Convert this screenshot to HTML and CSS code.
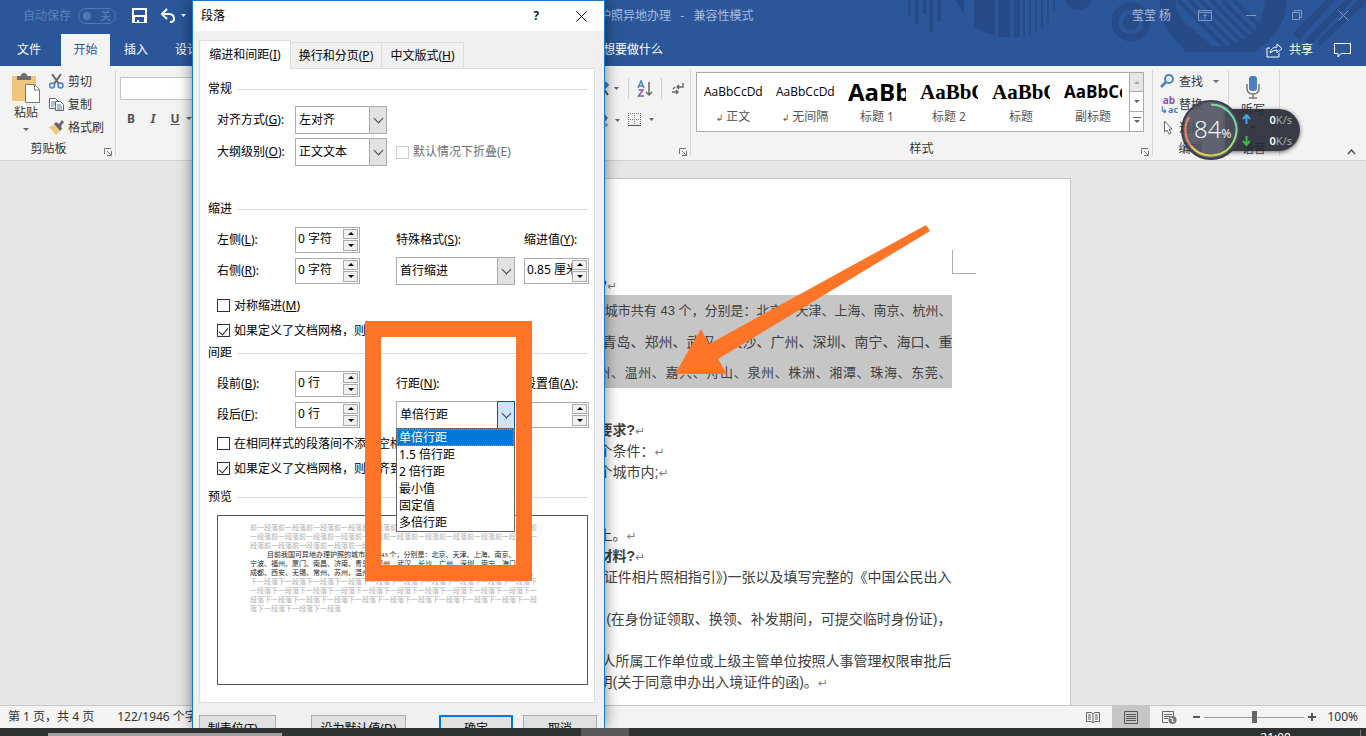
FILE: index.html
```html
<!DOCTYPE html>
<html lang="zh-CN">
<head>
<meta charset="utf-8">
<title>护照异地办理 - 兼容性模式</title>
<link rel="stylesheet" href="styles.css">
</head>
<body>
<header class="titlebar">
  <svg class="decor" width="470" height="66" viewBox="896 0 470 66" aria-hidden="true">
    <g fill="#264b87">
      <path d="M908 0h3v16h-3zM915 0h4v24h-4zM923 0h3v14h-3zM929 0h4v32h-4zM937 0h4v21h-4z"/>
      <path d="M955 0h9v14zM974 0h21v35q-12-2-21-8zM998 0h12v37h-12zM1014 0h6v37h-6zM1023 0h2v36h-2zM1029 0h2v35h-2zM1035 0h2v32h-2zM1041 0h2v28h-2zM1047 0h2v22h-2zM1053 0h2v12h-2z"/>
      <path d="M1065 0h27a14 13 0 0 1-27 0z"/>
      <circle cx="1131" cy="22" r="8"/>
      <path d="M1160 0h15q2 18 16 28l26 22h-30q-27-18-27-50zM1265 0h22q0 30-33 52h-68l-4-6h42q38-6 41-46z"/>
      <path d="M1293 33l33-33h9l-36 40zM1305 40l40-40h8l-43 46zM1318 40l40-40h8v3l-46 43z"/>
    </g>
    <circle cx="1131" cy="22" r="16" fill="none" stroke="#264b87" stroke-width="7"/>
    <g stroke="#264b87" stroke-width="4"><path d="M1178 0l50 50M1189 0l47 47M1200 0l42 42M1211 0l38 38M1222 0l33 33M1233 0l26 26"/></g>
  </svg>
  <div class="quick">
    <span class="autosave">自动保存</span>
    <button class="switch" aria-label="自动保存"><i></i><span>关</span></button>
    <button class="plain save" aria-label="保存"><svg width="15" height="15" viewBox="0 0 15 15"><path d="M0 0h15v15H0zM2 2v5h11V2zM3 9v5h2v-2h2v2h5V9z" fill="#fff" fill-rule="evenodd"/></svg></button>
    <button class="plain" aria-label="撤消"><svg width="27" height="16" viewBox="0 0 27 16"><path d="M7 1L2 6l5 5M2 6h7q5 0 5 5 0 3-4 3" fill="none" stroke="#fff" stroke-width="2"/><path d="M21 6h5l-2.500 3z" fill="#fff"/></svg></button>
  </div>
  <div class="doc-title">护照异地办理 &nbsp; - &nbsp; 兼容性模式</div>
  <div class="account">莹莹 杨</div>
  <button class="plain win" aria-label="功能区显示选项"><svg width="14" height="11" viewBox="0 0 14 11"><path d="M.5.5h13v10H.500zM1 2.500h12M7 9V4M5 6l2-2 2 2" fill="none" stroke="#7f9bc5"/></svg></button>
  <button class="plain win" aria-label="最小化"><svg width="11" height="11"><path d="M0 5.500h10" stroke="#7f9bc5"/></svg></button>
  <button class="plain win" aria-label="还原"><svg width="11" height="11" fill="none" stroke="#7f9bc5"><path d="M.5 2.500h7v7h-7zM2.500 2V.5h7v7H8"/></svg></button>
  <button class="plain win" aria-label="关闭"><svg width="11" height="11"><path d="M.5.5l10 10M10.500.5l-10 10" stroke="#7f9bc5"/></svg></button>
</header>
<nav class="tabs">
  <button>文件</button><button class="on">开始</button><button>插入</button><button>设计</button>
  <button class="tell">想要做什么</button>
  <button class="share"><svg width="17" height="15" viewBox="0 0 17 15" fill="none" stroke="#fff"><path d="M4 5H1v9h12v-4M4 10q1-6 7-6V1l5 4.500L11 10V7q-4 0-7 3z"/></svg>共享</button>
  <button class="comment" aria-label="批注"><svg width="17" height="15" viewBox="0 0 17 15"><path d="M.5.5h16v10H7l-3 3.500v-3.500H.500z" fill="none" stroke="#fff"/></svg></button>
</nav>
<section class="ribbon">
  <div class="group clip">
    <div class="tools">
      <button class="paste"><svg width="30" height="31" viewBox="0 0 30 31"><path d="M1 3h24v25H1z" fill="#efc67c"/><path d="M6 3h4q0-3 3-3t3 3h4v4H6z" fill="#6b6b6b"/><path d="M14.500 11.500h9l5 5v13h-14z" fill="#fff" stroke="#777"/><path d="M23.500 12v5h5" fill="none" stroke="#777"/></svg><span>粘贴</span><i class="caret"></i></button>
      <div class="stack">
        <button><svg width="15" height="15" viewBox="0 0 15 15"><path d="M3 0l7 10M12 0L5 10" stroke="#666" stroke-width="2"/><circle cx="3" cy="11.500" r="2.500" fill="none" stroke="#4a80bd" stroke-width="1.500"/><circle cx="11.500" cy="11.500" r="2.500" fill="none" stroke="#4a80bd" stroke-width="1.500"/></svg>剪切</button>
        <button><svg width="15" height="15" viewBox="0 0 15 15"><path d="M.5 1.500h6l2 2v8h-8z" fill="#fff" stroke="#666"/><path d="M2 5h4M2 7h4M2 9h3" stroke="#4a80bd"/><path d="M6.500 4.500h5l3 3v6h-8z" fill="#fff" stroke="#666"/><path d="M8 8h4M8 10h5M8 12h5" stroke="#4a80bd"/></svg>复制</button>
        <button><svg width="15" height="15" viewBox="0 0 15 15"><path d="M0 7l5-2 6 6-4 4z" fill="#efc67c"/><path d="M5 4l2-2 3 2 3-4 2 2-3 4 1 3-2 2z" fill="#666"/></svg>格式刷</button>
      </div>
    </div>
    <footer>剪贴板</footer><button class="launch" aria-label="剪贴板选项"><svg width="8" height="8"><path d="M.5 6V.5H7M3 3l4 4M7.500 3v4.500H3" fill="none" stroke="#777"/></svg></button>
  </div>
  <div class="group format">
    <div class="fontpart">
      <input class="fontname" aria-label="字体">
      <div class="bius"><button><b>B</b></button><button><b><em>I</em></b></button><button><b><u>U</u></b></button><i class="caret"></i></div>
    </div>
    <div class="parapart">
      <div class="prow"><button aria-label="中文版式"><svg width="23" height="18" viewBox="0 0 23 18"><path d="M0 5h11M8 2l3 3-3 3" fill="none" stroke="#4a80bd" stroke-width="2"/><path d="M2 15l4-7 5 7" fill="none" stroke="#555" stroke-width="2"/><path d="M17 7h5l-2.500 3z" fill="#666"/></svg></button><span class="bar"></span>
        <button aria-label="排序"><svg width="16" height="18" viewBox="0 0 16 18" fill="none"><path d="M1 8l3-7 3 7M2 6h4" stroke="#4a80bd" stroke-width="1.500"/><path d="M1.500 10H6l-4.500 6H7" stroke="#8e54a8" stroke-width="1.500"/><path d="M12 2v13M9 12l3 3 3-3" stroke="#666" stroke-width="1.500"/></svg></button><span class="bar"></span>
        <button class="marks" aria-label="显示编辑标记"><svg width="12" height="14" viewBox="0 0 12 14" fill="none" stroke="#666"><path d="M11 1v4H5M7 3L5 5l2 2M0 10h6M4 8l2 2-2 2M1 7l2-2" stroke-width="1.400"/></svg></button></div>
      <div class="prow two"><button aria-label="底纹"><svg width="24" height="14" viewBox="0 0 24 14"><path d="M2 5l5-5 4 5-4 5z" fill="#4a80bd"/><path d="M2 11h8v2H2z" fill="#fff" stroke="#777"/><path d="M18 6h5l-2.500 3z" fill="#666"/></svg></button>
        <button aria-label="边框"><svg width="27" height="14" viewBox="0 0 27 14"><path d="M1.500 0v12M7.500 0v12M13.500 0v12M1 .5h13M1 6.500h13" stroke="#777" stroke-dasharray="1 1"/><path d="M1 12.500h13" stroke="#555"/><path d="M22 5h5l-2.500 3z" fill="#666"/></svg></button></div>
    </div>
    <button class="launch" aria-label="段落设置"><svg width="8" height="8"><path d="M.5 6V.5H7M3 3l4 4M7.500 3v4.500H3" fill="none" stroke="#777"/></svg></button>
  </div>
  <div class="group styles">
    <div class="gallery">
      <button><span class="s-body">AaBbCcDd</span><small><i>↲</i> 正文</small></button>
      <button><span class="s-body">AaBbCcDd</span><small><i>↲</i> 无间隔</small></button>
      <button><span class="s-h1">AaBb</span><small>标题 1</small></button>
      <button><span class="s-serif">AaBbC</span><small>标题 2</small></button>
      <button><span class="s-serif">AaBbC</span><small>标题</small></button>
      <button><span class="s-sub">AaBbCc</span><small>副标题</small></button>
      <div class="scrolls"><button class="off" aria-label="上一行"><i class="caret up"></i></button><button aria-label="下一行"><i class="caret"></i></button><button aria-label="其他"><i class="caret lined"></i></button></div>
    </div>
    <footer>样式</footer><button class="launch" aria-label="样式选项"><svg width="8" height="8"><path d="M.5 6V.5H7M3 3l4 4M7.500 3v4.500H3" fill="none" stroke="#777"/></svg></button>
  </div>
  <div class="group edit">
    <div class="stack">
      <button><svg width="15" height="15" viewBox="0 0 15 15"><circle cx="9" cy="5" r="4" fill="none" stroke="#4a80bd" stroke-width="2"/><path d="M6 8l-5 5" stroke="#4a80bd" stroke-width="2.500"/></svg>查找<i class="caret"></i></button>
      <button><span class="abac" aria-hidden="true"><span>ab</span><span>↳ac</span></span>替换</button>
      <button><svg width="15" height="15" viewBox="0 0 15 15"><path d="M4.500 1v11l2.500-2 2 4 2-1-2-4h3z" fill="#fff" stroke="#666"/></svg>选择<i class="caret"></i></button>
    </div>
    <footer>编辑</footer>
  </div>
  <div class="group voice">
    <button class="paste"><svg width="14" height="24" viewBox="0 0 14 24"><rect x="3" y="0" width="8" height="15" rx="3" fill="#4a80bd"/><path d="M1 8v4q0 6 6 6t6-6V8M7 18v4M3 22h8" fill="none" stroke="#777" stroke-width="1.500"/></svg><span>听写</span><i class="caret"></i></button>
    <footer>语音</footer>
  </div>
  <button class="plain collapse" aria-label="折叠功能区"><svg width="9" height="6"><path d="M1 5l3.500-4L8 5" fill="none" stroke="#555" stroke-width="1.500"/></svg></button>
</section>
<main class="work">
  <article class="page">
    <i class="corner"></i>
    <p class="first"><b>?</b><span class="ret">↵</span></p>
    <div class="selected">
      <p class="tight right">目前我国可异地办理护照的城市共有 43 个，分别是：北京、天津、上海、南京、杭州、</p>
      <p>宁波、福州、厦门、南昌、济南、青岛、郑州、武汉、长沙、广州、深圳、南宁、海口、重</p>
      <p class="tight fill">庆、成都、西安、无锡、常州、苏州、温州、嘉兴、舟山、泉州、株洲、湘潭、珠海、东莞、</p>
    </div>
    <div class="text">
      <p><b>要求?</b><span class="ret">↵</span></p>
      <p>个条件：<span class="ret">↵</span></p>
      <p>个城市内;<span class="ret">↵</span></p>
      <p></p><p></p>
      <p>上。<span class="ret">↵</span></p>
      <p><b>材料?</b><span class="ret">↵</span></p>
      <p class="right">证件相片照相指引》)一张以及填写完整的《中国公民出入</p>
      <p></p>
      <p class="right">(在身份证领取、换领、补发期间，可提交临时身份证)，</p>
      <p></p>
      <p class="right">人所属工作单位或上级主管单位按照人事管理权限审批后</p>
      <p>明(关于同意申办出入境证件的函)。<span class="ret">↵</span></p>
    </div>
  </article>
</main>
<div class="status">
  <span>第 1 页，共 4 页</span><span>122/1946 个字</span>
  <div class="views">
    <button aria-label="阅读视图"><svg width="14" height="13" viewBox="0 0 14 13" fill="none" stroke="#666"><path d="M.5 1.500h5L7 3l1.500-1.500h5v9h-5L7 12l-1.500-1.500h-5zM7 3v9M2 4h3M2 6h3M2 8h3M9 4h3M9 6h3M9 8h3"/></svg></button>
    <button class="on" aria-label="页面视图"><svg width="14" height="13" viewBox="0 0 14 13" fill="none" stroke="#555"><path d="M.5.5h13v12H.500zM2 3.500h10M2 5.500h10M2 7.500h10M2 9.500h10"/></svg></button>
    <button aria-label="Web 版式视图"><svg width="15" height="13" viewBox="0 0 15 13"><path d="M6 11.500H.500V.5h11V5M2 3.500h8M2 5.500h6M2 7.500h4" fill="none" stroke="#666"/><circle cx="10.500" cy="9" r="4" fill="#777"/><path d="M8 7l3 1-1 2 2 1" fill="none" stroke="#fff"/></svg></button>
  </div>
  <button class="zoom" aria-label="缩小"><svg width="8" height="8"><path d="M1 4h7" stroke="#555" stroke-width="2"/></svg></button>
  <input class="slider" type="range" min="0" max="100" value="50" aria-label="显示比例">
  <button class="zoom" aria-label="放大"><svg width="8" height="8"><path d="M0 4h8M4 0v8" stroke="#555" stroke-width="2"/></svg></button>
  <span class="pct">100%</span>
</div>
<footer class="taskbar"><span class="search"></span><span class="app"></span><span class="clock">21:08</span></footer>

<form class="dialog" role="dialog" aria-label="段落">
  <header><h1>段落</h1><button type="button" class="plain" aria-label="帮助">?</button><button type="button" class="plain" aria-label="关闭"><svg width="11" height="11"><path d="M.5.5l10 10M10.500.5l-10 10" stroke="#000"/></svg></button></header>
  <div class="dtabs"><button type="button" class="on">缩进和间距(<u>I</u>)</button><button type="button">换行和分页(<u>P</u>)</button><button type="button">中文版式(<u>H</u>)</button></div>
  <div class="panel">
    <h2>常规</h2>
    <div class="row tall"><label for="align">对齐方式(<u>G</u>):</label><div class="combo"><select id="align"><option>左对齐</option></select><i></i></div></div>
    <div class="row tall"><label for="outline">大纲级别(<u>O</u>):</label><div class="combo"><select id="outline"><option>正文文本</option></select><i></i></div><label class="check dim"><input type="checkbox" disabled>默认情况下折叠(E)</label></div>
    <h2 class="spaced">缩进</h2>
    <div class="row"><label for="left">左侧(<u>L</u>):</label><div class="spin"><input id="left" value="0 字符"><div><button type="button" aria-label="增加"></button><button type="button" aria-label="减少"></button></div></div><label for="special">特殊格式(<u>S</u>):</label><label for="by">缩进值(<u>Y</u>):</label></div>
    <div class="row"><label for="right">右侧(<u>R</u>):</label><div class="spin"><input id="right" value="0 字符"><div><button type="button" aria-label="增加"></button><button type="button" aria-label="减少"></button></div></div><div class="combo wide"><select id="special"><option>首行缩进</option></select><i></i></div><div class="spin"><input id="by" value="0.85 厘米"><div><button type="button" aria-label="增加"></button><button type="button" aria-label="减少"></button></div></div></div>
    <div class="checks upper"><label class="check"><input type="checkbox"><span>对称缩进(<u>M</u>)</span></label><label class="check"><input type="checkbox" checked><span>如果定义了文档网格，则自动调整右缩进(<u>D</u>)</span></label></div>
    <h2>间距</h2>
    <div class="row"><label for="before">段前(<u>B</u>):</label><div class="spin"><input id="before" value="0 行"><div><button type="button" aria-label="增加"></button><button type="button" aria-label="减少"></button></div></div><label for="spacing">行距(<u>N</u>):</label><label for="at">设置值(<u>A</u>):</label></div>
    <div class="row"><label for="after">段后(<u>F</u>):</label><div class="spin"><input id="after" value="0 行"><div><button type="button" aria-label="增加"></button><button type="button" aria-label="减少"></button></div></div>
      <div class="combo wide open"><select id="spacing"><option>单倍行距</option></select><i></i>
        <ul class="list"><li class="on">单倍行距</li><li>1.5 倍行距</li><li>2 倍行距</li><li>最小值</li><li>固定值</li><li>多倍行距</li></ul></div>
      <div class="spin"><input id="at"><div><button type="button" aria-label="增加"></button><button type="button" aria-label="减少"></button></div></div></div>
    <div class="checks"><label class="check"><input type="checkbox"><span>在相同样式的段落间不添加空格(<u>C</u>)</span></label><label class="check"><input type="checkbox" checked><span>如果定义了文档网格，则对齐到网格(<u>W</u>)</span></label></div>
    <h2 class="last">预览</h2>
    <div class="preview">
      <p>前一段落前一段落前一段落前一段落前一段落前一段落前一段落前一段落前一段落前一段落前<br>一段落前一段落前一段落前一段落前一段落前一段落前一段落前一段落前一段落前一段落前一<br>段落前一段落前一段落前一段落前一段落</p>
      <p class="now">目前我国可异地办理护照的城市共有 43 个，分别是：北京、天津、上海、南京、杭州、<br>宁波、福州、厦门、南昌、济南、青岛、郑州、武汉、长沙、广州、深圳、南宁、海口、重、<br>成都、西安、无锡、常州、苏州、温州、嘉兴、舟山、泉州、株洲、湘潭、珠海、东莞、佛。</p>
      <p>下一段落下一段落下一段落下一段落下一段落下一段落下一段落下一段落下一段落下一段落下<br>一段落下一段落下一段落下一段落下一段落下一段落下一段落下一段落下一段落下一段落下一<br>段落下一段落下一段落下一段落下一段落下一段落下一段落下一段落下一段落下一段落下一段<br>落下一段落下一段落下一段落</p>
    </div>
  </div>
  <div class="actions"><button type="button">制表位(<u>T</u>)...</button><button type="button" class="default">设为默认值(<u>D</u>)</button><button type="button" class="ok">确定</button><button type="button" class="cancel">取消</button></div>
</form>

<div class="frame"></div>
<svg class="arrow" width="256" height="152" viewBox="0 0 256 152" aria-hidden="true"><path d="M251 0l4 6L43 134l9 15H0L26 104l8 15z" fill="#ff7527"/></svg>
<aside class="speed">
  <div class="pill"><p><svg width="9" height="11" viewBox="0 0 9 11"><path d="M4.500 1v9M1 5l3.500-4L8 5" fill="none" stroke="#3ba7f0" stroke-width="2"/></svg><b>0</b>K/s</p><p><svg width="9" height="11" viewBox="0 0 9 11"><path d="M4.500 1v9M1 6l3.500 4L8 6" fill="none" stroke="#35c042" stroke-width="2"/></svg><b>0</b>K/s</p></div>
  <div class="dial"><svg width="60" height="60" viewBox="0 0 60 60"><defs><linearGradient id="g" x1="0" y1="1" x2="1" y2="0"><stop offset="0" stop-color="#f6c945"/><stop offset=".5" stop-color="#b6dc66"/><stop offset="1" stop-color="#4fd8d0"/></linearGradient></defs><circle cx="30" cy="30" r="29" fill="#4b4e5ce0" stroke="#3b3e4a" stroke-width="2"/><path d="M30 4.500A25.500 25.500 0 1 1 10 46" fill="none" stroke="url(#g)" stroke-width="2"/><path d="M10 46A25.500 25.500 0 0 1 8 17" fill="none" stroke="#f0875c" stroke-width="2"/></svg><strong>84<small>%</small></strong></div>
</aside>
</body>
</html>
```
FILE: styles.css
```css
*{box-sizing:border-box}
body{margin:0;height:100vh;display:flex;flex-direction:column;overflow:hidden;position:relative;font:12px/16px "Noto Sans","Noto Sans CJK SC",sans-serif;color:#262626;background:#e6e6e6}
button,input,select{font:inherit;color:inherit;margin:0}
button{border:0;background:none;padding:0;display:flex;align-items:center;justify-content:center;white-space:nowrap}
p,h1,h2,ul{margin:0;padding:0;font-weight:400;font-size:12px}
svg{flex:none;display:block}
.caret{width:0;height:0;flex:none;border:3px solid transparent;border-top-color:#666;border-bottom:0}
.caret.up{border-top:0;border-bottom:3px solid #aaa}

.titlebar{flex:none;height:34px;background:#2b579a;display:flex;align-items:center;color:#a7bbda;padding-bottom:3px}
.decor{position:absolute;right:0;top:0}
.quick{width:599px;flex:none;display:flex;align-items:center;padding-left:23px}
.autosave{color:#5b82bb;width:55px}
.switch{width:38px;height:16px;border:1px solid #5078b3;border-radius:8px;color:#5b82bb;justify-content:space-between;padding:0 4px;font-size:11px}
.switch i{width:8px;height:8px;border-radius:4px;background:#5078b3}
.save{margin:0 13px 0 16px}
.doc-title{flex:1;white-space:pre}
.account{position:relative;width:50px}
.win{position:relative;width:46px}
.tabs{flex:none;height:32px;background:#2b579a;display:flex;color:#fff;padding-left:5px}
.tabs button{width:48px;margin-right:3px;position:relative}
.tabs button.on{background:#f3f3f3;color:#2b579a;width:49px;margin:0 2px 0 5px}
.tabs .tell{width:auto;margin-left:389px;margin-right:auto}
.tabs .share{width:auto;gap:6px;margin-right:21px}
.tabs .comment{width:17px;margin-right:15px}

.ribbon{flex:none;height:95px;background:#f3f3f3;border-bottom:1px solid #d0d0d0;display:flex;color:#333}
.group{display:grid;grid-template-rows:69px 1fr;position:relative;margin:4px 0;border-right:1px solid #d5d5d5}
.group footer{text-align:center;line-height:18px;padding-top:1px}
.launch{position:absolute;right:3px;bottom:0}
.clip{width:116px;flex:none}
.clip footer{padding-right:18px}
.tools{display:flex;gap:6px;padding-left:11px}
.paste{flex-direction:column;justify-content:flex-start;width:30px;padding-top:3px}
.paste .caret{margin-top:6px}
.paste span{line-height:18px}
.stack{display:flex;flex-direction:column}
.stack button{height:23px;gap:4px;justify-content:flex-start}
.clip .stack{padding-left:2px}
.format{width:575px;flex:none;display:flex}
.fontpart{padding:7px 0 0 4px;width:481px}
.fontname{width:90px;height:23px;border:1px solid #c6c6c6;background:#fff;display:block}
.bius{display:flex;align-items:center;height:37px;color:#555}
.bius button{width:22px}
.parapart{padding-top:8px}
.prow{display:flex;align-items:center;height:21px;gap:8px}
.prow .marks{margin-left:2px}
.prow.two{margin-top:10px;gap:6px}
.bar{width:1px;height:21px;background:#d0d0d0}
.styles{width:462px;flex:none}
.gallery{margin:2px 8px 0 5px;height:60px;border:1px solid #ababab;background:#fff;display:flex}
.gallery>button{width:72px;flex-direction:column;justify-content:flex-start}
.gallery>button>span{width:58px;height:35px;line-height:38px;overflow:hidden;text-align:left;color:#000}
.gallery small{font-size:12px;line-height:18px;color:#555}
.gallery small i{font:9px "DejaVu Sans"}
.s-body{font-family:"Open Sans";font-size:12px}
.s-h1{font:bold 24px "Open Sans"}
.s-serif{font:bold 21px "Liberation Serif"}
.s-sub{font:bold 17px "Open Sans"}
.scrolls{margin-left:auto;width:14px;display:grid;grid-template-rows:1fr 1fr 1fr}
.scrolls button{border-left:1px solid #ababab;border-bottom:1px solid #ababab}
.scrolls button:last-child{border-bottom:0}
.scrolls .off{background:#e6e6e6}
.lined{position:relative}
.lined::before{content:"";position:absolute;left:-4px;top:-6px;width:8px;height:1px;background:#666}
.edit{width:76px;flex:none}
.edit .stack{padding-left:7px}
.edit .caret{margin-left:6px}
.abac{width:15px;display:grid;font-weight:700;font-size:10px;line-height:9px;color:#8e54a8}
.abac span+span{color:#4a80bd;font-size:9px}
.voice{width:51px;flex:none}
.voice .paste{width:48px;padding-top:6px;gap:1px}
.collapse{margin:0 10px 5px auto;align-items:flex-end}

.work{flex:1;min-height:0;overflow:hidden;padding:17px 21px 0 0;border-bottom:1px solid #c6c6c6}
.page{position:relative;width:796px;height:100%;margin:0 auto;background:#fff;border:1px solid #c6c6c6;border-bottom:0;padding:96px 118px 0 117px;font:14px/21px "Liberation Sans","Noto Sans CJK SC",sans-serif;color:#404040}
.page p{font-size:14px;height:21px;white-space:nowrap}
.corner{position:absolute;right:94px;top:71px;width:24px;height:24px;border-left:1px solid #ababab;border-bottom:1px solid #ababab}
.page .first{padding-left:206px;height:20px}
.ret{font:12px "DejaVu Sans";color:#808080}
.selected{background:#c6c6c6}
.selected p{height:31px;line-height:32px}
.page .tight{font-size:13px}
.right{text-align:right}
.fill{text-align-last:justify}
.text{padding:32px 0 0 206px}
.text p.right{display:flex;justify-content:flex-end}

.status{flex:none;height:22px;background:#f3f3f3;display:flex;align-items:center;padding:0 8px;color:#333}
.status>span:first-child{margin-right:23px}
.views{display:flex;margin-left:auto;height:100%}
.views button{width:38px}
.views .on{background:#c6c6c6}
.zoom{width:16px}
.slider{appearance:none;width:100px;height:14px;margin:0;background:linear-gradient(#a0a0a0,#a0a0a0) center/100% 1px no-repeat}
.slider::-webkit-slider-thumb{appearance:none;width:5px;height:12px;background:#666}
.pct{margin-left:7px}
.taskbar{flex:none;height:8px;background:#303232;display:flex;overflow:hidden;position:relative;z-index:3}
.search{width:234px;margin:5px 0 0 48px;background:#a3a0a3}
.app{width:48px;margin-left:299px;background:#585858}
.clock{margin:2px 5px 0 auto;padding-right:69px;color:#fff;line-height:16px;border-right:1px solid #777}

.dialog{position:absolute;left:192px;top:0;bottom:8px;width:413px;background:#f0f0f0;border:1px solid #1979ca;border-bottom:0;box-shadow:0 0 14px rgba(0,0,0,.5);clip-path:inset(0 -20px 0 -20px);overflow:hidden;color:#000;z-index:1}
.dialog header{height:30px;background:#fff;display:flex;align-items:center;padding:0 15px 0 8px}
.dialog header h1{flex:1}
.dialog header button+button{margin-left:34px;width:16px}
.dialog header button{font-weight:600}
.dtabs{display:flex;align-items:flex-end;height:37px;padding-left:6px}
.dtabs button{height:26px;width:91px;border:1px solid #dcdcdc;border-left:0;border-bottom:0}
.dtabs button:last-child{width:82px}
.dtabs .on{height:29px;width:92px;background:#fff;border-left:1px solid #dcdcdc;margin-bottom:-1px;position:relative;z-index:1}
.panel{margin:0 9px 0 6px;border:1px solid #dcdcdc;background:#fff;padding:10px 6px 17px 8px}
.panel h2{display:flex;align-items:center;gap:5px;line-height:20px;margin-bottom:5px}
.panel h2::after{content:"";flex:1;height:1px;background:#dcdcdc}
.panel h2.spaced{margin-top:31px}
.panel h2.last{margin:6px 0 8px}
.row{display:grid;grid-template-columns:78px 101px 128px 1fr;align-items:center;height:31px;padding-left:9px;white-space:nowrap}
.row.tall{height:32px}
.combo{position:relative;width:92px;height:28px}
.combo.wide{width:119px}
.combo select{appearance:none;width:100%;height:100%;border:1px solid #ababab;border-radius:0;background:#fff;padding:0 3px;outline:0;opacity:1}
.combo>i{position:absolute;right:0;top:0;width:18px;height:28px;border:1px solid #ababab;background:#e2e2e2;pointer-events:none}
.combo>i::after{content:"";position:absolute;left:5px;top:8px;width:6px;height:6px;border:solid #444;border-width:0 1px 1px 0;transform:rotate(45deg)}
.combo.open>i{background:#cce4f7;border-color:#0a5499}
.list{position:absolute;left:0;top:27px;width:119px;background:#fff;border:1px solid #646464;list-style:none;z-index:2}
.list li{line-height:17px;height:17px;padding-left:2px}
.list .on{background:#0078d7;color:#fff;outline:1px dotted #ff8728;outline-offset:-1px}
.spin{width:65px;height:26px;border:1px solid #ababab;background:#fff;display:flex;padding:1px}
.spin input{flex:1;min-width:0;border:0;padding:0 0 2px 1px;background:none;outline:0}
.spin>div{width:15px;display:grid;gap:1px}
.spin button{border:1px solid #ababab;background:#f0f0f0}
.spin button::after{content:"";border:3px solid transparent;border-bottom-color:#000;border-top:0}
.spin button+button::after{border:3px solid transparent;border-top-color:#000;border-bottom:0}
.checks{padding:1px 0 0 9px}
.checks.upper{padding-top:7px}
.check{display:flex;align-items:center;gap:4px;height:25px;white-space:nowrap}
.check input{appearance:none;width:13px;height:13px;border:1px solid #333;background:#fff;display:grid;place-items:center}
.check input:checked::after{content:"";width:4px;height:8px;border:solid #222;border-width:0 1px 1px 0;transform:rotate(40deg)}
.dim{color:#6d6d6d}
.dim input{border-color:#ccc}
.preview{margin-left:9px;height:170px;border:1px solid #555;padding:8px 0 0 32px;font:7px/9px "Liberation Serif","Noto Sans CJK SC",serif;color:#b0b0b0;white-space:nowrap}
.preview p{font-size:7px}
.preview .now{color:#222;text-indent:17px}
.actions{display:flex;padding:12px 7px 0 6px}
.actions button{height:27px;width:77px;border:1px solid #adadad;background:#e1e1e1}
.actions .default{width:95px;margin-left:35px}
.actions .ok{width:74px;margin:0 10px 0 auto;border:2px solid #0078d7}
.actions .cancel{width:74px;margin-right:0}

.frame{position:absolute;left:365px;top:321px;width:167px;height:260px;border:16px solid #ff7527;z-index:2}
.arrow{position:absolute;left:675px;top:225px;z-index:2}
.speed{position:absolute;left:1181px;top:100px;width:120px;height:60px;z-index:2;color:#fff}
.pill{position:absolute;left:44px;top:9px;width:75px;height:42px;border-radius:0 21px 21px 0;background:rgba(36,39,50,.9);box-shadow:0 1px 4px #666}
.pill p{height:21px;display:flex;align-items:center;padding:0 8px 0 17px;font-size:11px;color:#aaa}
.pill b{color:#fff;margin-left:auto;font-weight:600}
.dial{position:absolute;left:0;top:0}
.dial strong{position:absolute;left:13px;top:14px;font:300 24px/30px "Open Sans",sans-serif;display:flex;align-items:baseline}
.dial small{font-size:12px;font-weight:400}
```
